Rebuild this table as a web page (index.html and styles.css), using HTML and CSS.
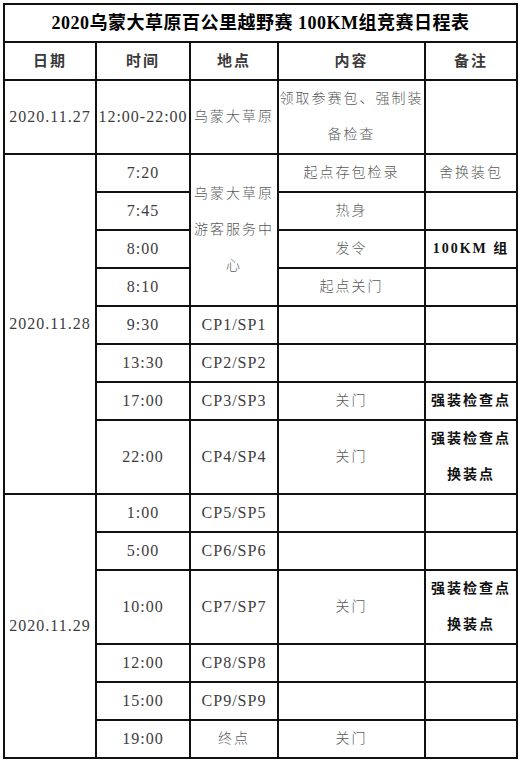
FILE: index.html
```html
<!DOCTYPE html>
<html lang="zh-CN">
<head>
<meta charset="utf-8">
<title>2020乌蒙大草原百公里越野赛 100KM组竞赛日程表</title>
<link rel="stylesheet" href="styles.css">
</head>
<body>
<table class="schedule">
  <colgroup>
    <col class="c-date"><col class="c-time"><col class="c-place"><col class="c-content"><col class="c-note">
  </colgroup>
  <tr class="r1">
    <th colspan="5" class="title">2020乌蒙大草原百公里越野赛 100KM组竞赛日程表</th>
  </tr>
  <tr class="r1 head">
    <th>日期</th><th>时间</th><th>地点</th><th>内容</th><th>备注</th>
  </tr>
  <tr class="r2">
    <td class="num">2020.11.27</td>
    <td class="num">12:00-22:00</td>
    <td class="cjk">乌蒙大草原</td>
    <td class="cjk">领取参赛包、强制装<br>备检查</td>
    <td></td>
  </tr>
  <tr class="r1">
    <td class="num" rowspan="8">2020.11.28</td>
    <td class="num">7:20</td>
    <td class="cjk" rowspan="4">乌蒙大草原<br>游客服务中<br>心</td>
    <td class="cjk">起点存包检录</td>
    <td class="cjk">舍换装包</td>
  </tr>
  <tr class="r1">
    <td class="num">7:45</td>
    <td class="cjk">热身</td>
    <td></td>
  </tr>
  <tr class="r1">
    <td class="num">8:00</td>
    <td class="cjk">发令</td>
    <td class="strong">100KM 组</td>
  </tr>
  <tr class="r1">
    <td class="num">8:10</td>
    <td class="cjk">起点关门</td>
    <td></td>
  </tr>
  <tr class="r1">
    <td class="num">9:30</td>
    <td class="num">CP1/SP1</td>
    <td></td>
    <td></td>
  </tr>
  <tr class="r1">
    <td class="num">13:30</td>
    <td class="num">CP2/SP2</td>
    <td></td>
    <td></td>
  </tr>
  <tr class="r1">
    <td class="num">17:00</td>
    <td class="num">CP3/SP3</td>
    <td class="cjk">关门</td>
    <td class="strong">强装检查点</td>
  </tr>
  <tr class="r2">
    <td class="num">22:00</td>
    <td class="num">CP4/SP4</td>
    <td class="cjk">关门</td>
    <td class="strong">强装检查点<br>换装点</td>
  </tr>
  <tr class="r1">
    <td class="num" rowspan="6">2020.11.29</td>
    <td class="num">1:00</td>
    <td class="num">CP5/SP5</td>
    <td></td>
    <td></td>
  </tr>
  <tr class="r1">
    <td class="num">5:00</td>
    <td class="num">CP6/SP6</td>
    <td></td>
    <td></td>
  </tr>
  <tr class="r2">
    <td class="num">10:00</td>
    <td class="num">CP7/SP7</td>
    <td class="cjk">关门</td>
    <td class="strong">强装检查点<br>换装点</td>
  </tr>
  <tr class="r1">
    <td class="num">12:00</td>
    <td class="num">CP8/SP8</td>
    <td></td>
    <td></td>
  </tr>
  <tr class="r1">
    <td class="num">15:00</td>
    <td class="num">CP9/SP9</td>
    <td></td>
    <td></td>
  </tr>
  <tr class="r1">
    <td class="num">19:00</td>
    <td class="cjk">终点</td>
    <td class="cjk">关门</td>
    <td></td>
  </tr>
</table>
</body>
</html>
```

FILE: styles.css
```css
html, body {
  margin: 0;
  background: #ffffff;
}

body {
  padding: 3px 0 0 3px;
  font-family: "Liberation Serif", "Noto Sans CJK SC", serif;
  color: #444;
}

.schedule {
  border-collapse: collapse;
  table-layout: fixed;
  width: 514px;
}

.c-date { width: 92px; }
.c-time { width: 94px; }
.c-place { width: 88px; }
.c-content { width: 147px; }
.c-note { width: 92px; }

.schedule th,
.schedule td {
  border: 2px solid #111;
  padding: 0;
  text-align: center;
  vertical-align: middle;
  line-height: 36px;
  overflow: hidden;
  white-space: nowrap;
}

.r1 { height: 38px; }
.r2 { height: 74px; }

.title {
  font-size: 18px;
  font-weight: bold;
  color: #000;
  letter-spacing: 0.5px;
}

.head th {
  font-size: 15px;
  font-weight: bold;
  color: #3a3a3a;
  letter-spacing: 2px;
}

.num {
  font-size: 16px;
  letter-spacing: 1px;
  color: #3c3c3c;
}

.cjk {
  font-size: 14px;
  font-weight: 300;
  letter-spacing: 2px;
  color: #5a5a5a;
}

.strong {
  font-size: 14px;
  font-weight: bold;
  letter-spacing: 2px;
  color: #111;
}
```
